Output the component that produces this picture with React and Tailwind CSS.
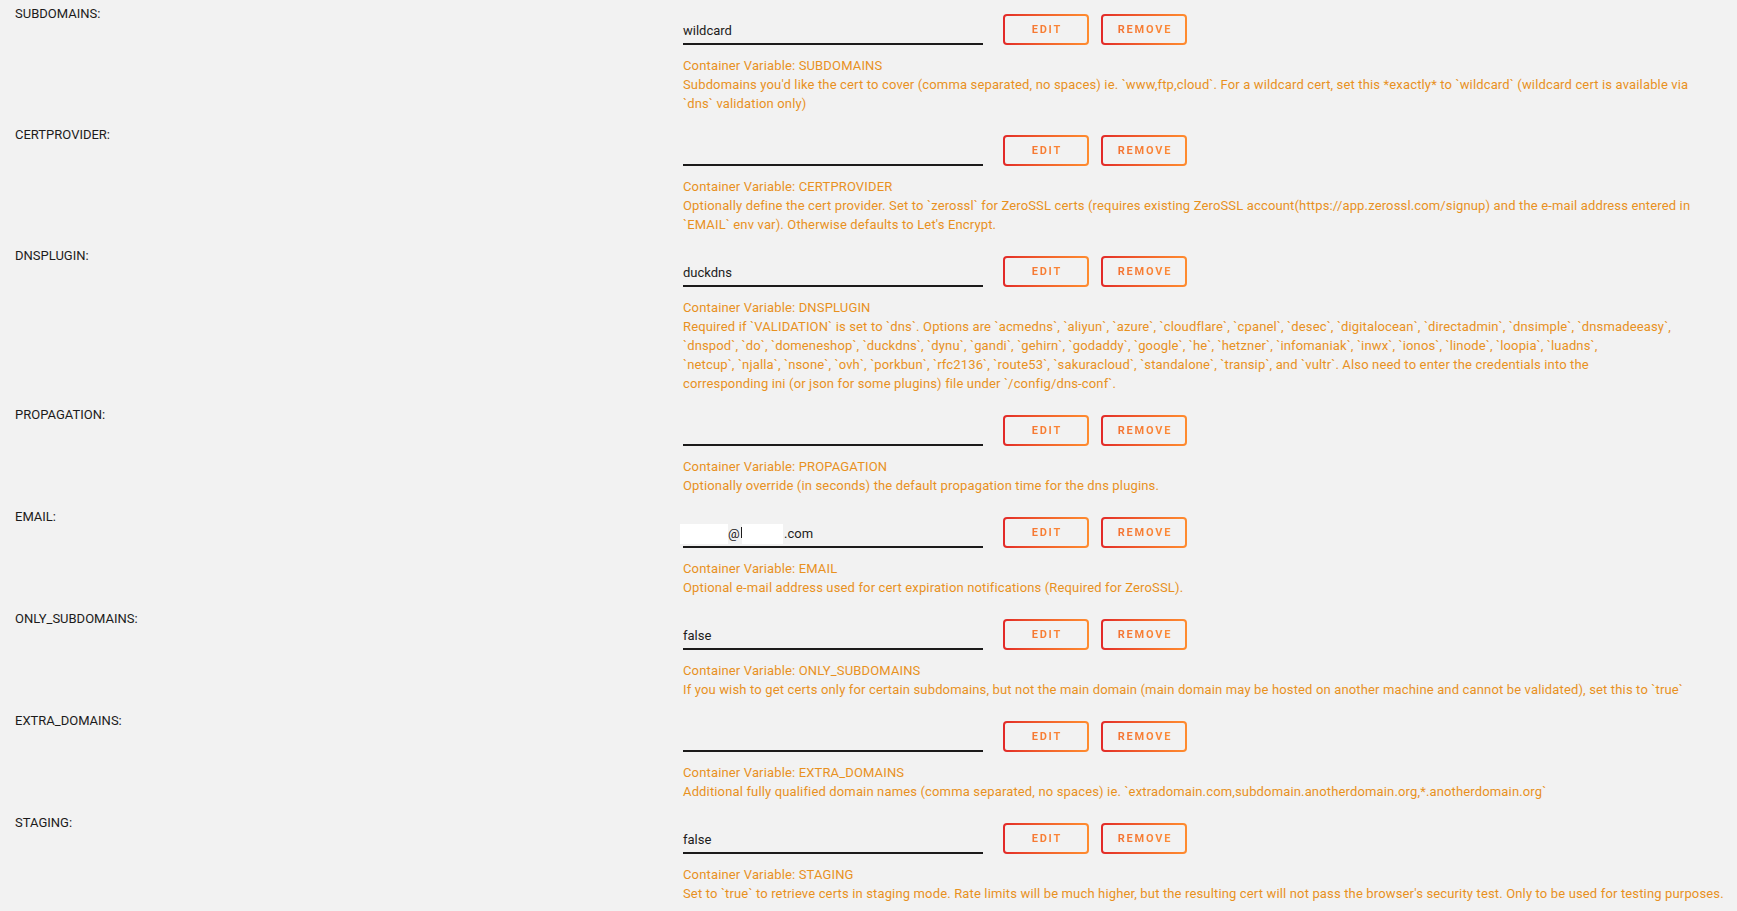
import React from "react";

const rows = [
  {
    label: "SUBDOMAINS:",
    value: "wildcard",
    name: "SUBDOMAINS",
    lines: [
      "Subdomains you'd like the cert to cover (comma separated, no spaces) ie. `www,ftp,cloud`. For a wildcard cert, set this *exactly* to `wildcard` (wildcard cert is available via",
      "`dns` validation only)",
    ],
  },
  {
    label: "CERTPROVIDER:",
    value: "",
    name: "CERTPROVIDER",
    lines: [
      "Optionally define the cert provider. Set to `zerossl` for ZeroSSL certs (requires existing ZeroSSL account(https://app.zerossl.com/signup) and the e-mail address entered in",
      "`EMAIL` env var). Otherwise defaults to Let's Encrypt.",
    ],
  },
  {
    label: "DNSPLUGIN:",
    value: "duckdns",
    name: "DNSPLUGIN",
    lines: [
      "Required if `VALIDATION` is set to `dns`. Options are `acmedns`, `aliyun`, `azure`, `cloudflare`, `cpanel`, `desec`, `digitalocean`, `directadmin`, `dnsimple`, `dnsmadeeasy`,",
      "`dnspod`, `do`, `domeneshop`, `duckdns`, `dynu`, `gandi`, `gehirn`, `godaddy`, `google`, `he`, `hetzner`, `infomaniak`, `inwx`, `ionos`, `linode`, `loopia`, `luadns`,",
      "`netcup`, `njalla`, `nsone`, `ovh`, `porkbun`, `rfc2136`, `route53`, `sakuracloud`, `standalone`, `transip`, and `vultr`. Also need to enter the credentials into the",
      "corresponding ini (or json for some plugins) file under `/config/dns-conf`.",
    ],
  },
  {
    label: "PROPAGATION:",
    value: "",
    name: "PROPAGATION",
    lines: ["Optionally override (in seconds) the default propagation time for the dns plugins."],
  },
  {
    label: "EMAIL:",
    value: "__email__",
    name: "EMAIL",
    lines: ["Optional e-mail address used for cert expiration notifications (Required for ZeroSSL)."],
  },
  {
    label: "ONLY_SUBDOMAINS:",
    value: "false",
    name: "ONLY_SUBDOMAINS",
    lines: [
      "If you wish to get certs only for certain subdomains, but not the main domain (main domain may be hosted on another machine and cannot be validated), set this to `true`",
    ],
  },
  {
    label: "EXTRA_DOMAINS:",
    value: "",
    name: "EXTRA_DOMAINS",
    lines: [
      "Additional fully qualified domain names (comma separated, no spaces) ie. `extradomain.com,subdomain.anotherdomain.org,*.anotherdomain.org`",
    ],
  },
  {
    label: "STAGING:",
    value: "false",
    name: "STAGING",
    lines: [
      "Set to `true` to retrieve certs in staging mode. Rate limits will be much higher, but the resulting cert will not pass the browser's security test. Only to be used for testing purposes.",
    ],
  },
];

function GradButton({ children }) {
  return (
    <div className="w-[86px] h-[31px] rounded-[4px] p-[2px] bg-gradient-to-r from-[#e22828] to-[#ff8c2f]">
      <div className="w-full h-full rounded-[2px] bg-[#f2f2f2] flex items-center justify-center">
        <span className="w-full text-center text-[11px] font-bold tracking-[1.8px] pl-[1.8px] leading-[27px] bg-gradient-to-r from-[#f06a30] to-[#ff9238] bg-clip-text text-transparent">
          {children}
        </span>
      </div>
    </div>
  );
}

function Value({ value }) {
  if (value === "__email__") {
    return (
      <div className="flex items-center">
        <span className="inline-block w-[48px] h-[20px] bg-white -ml-[3px]" />
        <span className="w-[13px]">@</span>
        <span className="inline-block w-[1px] h-[11px] bg-[#1c1b1b] mt-[-2px]" />
        <span className="inline-block w-[41px] h-[20px] bg-white" />
        <span className="ml-[1px]">.com</span>
      </div>
    );
  }
  return <span>{value}</span>;
}

export default function App() {
  return (
    <div
      className="min-h-screen bg-[#f2f2f2] text-[#1c1b1b] text-[13px]"
      style={{ fontFamily: "Roboto, 'Open Sans', sans-serif" }}
    >
      {rows.map((r) => (
        <div key={r.name} className="flex pl-[15px]">
          <div className="w-[668px] shrink-0 pt-[4px] leading-[19px]">{r.label}</div>
          <div className="pt-[14px] pb-[7px]">
            <div className="flex items-start">
              <div className="w-[300px] h-[31px] border-b-2 border-[#1c1b1b] flex items-center pt-[4px]">
                <Value value={r.value} />
              </div>
              <div className="ml-[20px] flex gap-[12px]">
                <GradButton>EDIT</GradButton>
                <GradButton>REMOVE</GradButton>
              </div>
            </div>
            <div className="mt-[11px] pb-[1px] text-[#e8911e] leading-[19px] text-[13px] tracking-[0.15px]">
              <div className="whitespace-nowrap">Container Variable: {r.name}</div>
              {r.lines.map((l, i) => (
                <div key={i} className="whitespace-nowrap">
                  {l}
                </div>
              ))}
            </div>
          </div>
        </div>
      ))}
    </div>
  );
}
